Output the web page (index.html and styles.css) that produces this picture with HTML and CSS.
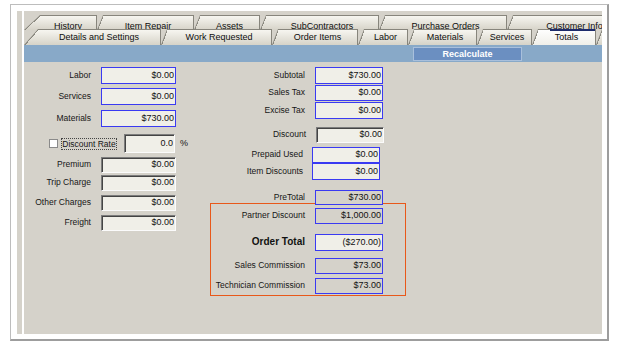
FILE: index.html
```html
<!DOCTYPE html>
<html lang="en">
<head>
    <meta charset="UTF-8" />
    <title>Work Order - Totals</title>
    <link rel="stylesheet" href="styles.css">
</head>
<body>
    <div class="frame">
        <div class="stripe"></div>
        <div class="panel">
            <div class="tabs">
                <div class="tab-row back">
                    <div class="tab first t-history">History</div>
                    <div class="tab t-repair">Item Repair</div>
                    <div class="tab t-assets">Assets</div>
                    <div class="tab t-subs">SubContractors</div>
                    <div class="tab t-po">Purchase Orders</div>
                    <div class="tab t-customer">Customer Info</div>
                </div>
                <div class="tab-row front">
                    <div class="tab first t-details">Details and Settings</div>
                    <div class="tab t-work">Work Requested</div>
                    <div class="tab t-items">Order Items</div>
                    <div class="tab t-labor">Labor</div>
                    <div class="tab t-materials">Materials</div>
                    <div class="tab t-services">Services</div>
                    <div class="tab active t-totals">Totals</div>
                    <div class="tab t-more"></div>
                </div>
            </div>

            <div class="bar">
                <button type="button" class="recalc">Recalculate</button>
            </div>

            <div class="form">
                <div class="col-left">
                    <div class="row"><label>Labor</label><input class="field" value="$0.00" readonly></div>
                    <div class="row r-services"><label>Services</label><input class="field" value="$0.00" readonly></div>
                    <div class="row r-materials"><label>Materials</label><input class="field" value="$730.00" readonly></div>
                    <div class="row r-rate">
                        <span class="check"></span>
                        <span class="focus">Discount Rate</span>
                        <input class="field sunk rate" value="0.0" readonly>
                        <span class="pct">%</span>
                    </div>
                    <div class="row r-premium"><label>Premium</label><input class="field sunk h16" value="$0.00" readonly></div>
                    <div class="row r-trip"><label>Trip Charge</label><input class="field sunk h16" value="$0.00" readonly></div>
                    <div class="row r-other"><label>Other Charges</label><input class="field sunk h16" value="$0.00" readonly></div>
                    <div class="row r-other"><label>Freight</label><input class="field sunk h16" value="$0.00" readonly></div>
                </div>

                <div class="col-mid">
                    <div class="row"><label>Subtotal</label><input class="field" value="$730.00" readonly></div>
                    <div class="row r-tax"><label>Sales Tax</label><input class="field h16" value="$0.00" readonly></div>
                    <div class="row r-tax"><label>Excise Tax</label><input class="field" value="$0.00" readonly></div>
                    <div class="row r-discount"><label>Discount</label><input class="field sunk h16" value="$0.00" readonly></div>
                    <div class="row r-prepaid"><label>Prepaid Used</label><input class="field h16" value="$0.00" readonly></div>
                    <div class="row r-itemdisc"><label>Item Discounts</label><input class="field" value="$0.00" readonly></div>
                    <div class="row r-pretotal"><label>PreTotal</label><input class="field ro h15" value="$730.00" readonly></div>

                    <div class="totals-box">
                        <div class="row"><label>Partner Discount</label><input class="field ro h16" value="$1,000.00" readonly></div>
                        <div class="row r-ordertotal"><label class="strong">Order Total</label><input class="field" value="($270.00)" readonly></div>
                        <div class="row r-salescomm"><label>Sales Commission</label><input class="field ro h16" value="$73.00" readonly></div>
                        <div class="row r-other"><label>Technician Commission</label><input class="field ro h16" value="$73.00" readonly></div>
                    </div>
                </div>
            </div>
        </div>
    </div>
</body>
</html>
```

FILE: styles.css
```css
body {
    margin: 0;
    background: #fff;
    font-family: "Liberation Sans", Arial, sans-serif;
    font-size: 8.5px;
    color: #161616;
}

.frame {
    display: flex;
    gap: 2px;
    width: 585px;
    height: 323px;
    margin: 4px 0 0 10px;
    padding: 6px 5px 5px 6px;
    background: #fff;
    border: 1px solid #bdbdbd;
    border-right: 2px solid #9d9d9d;
    border-bottom: 2px solid #9d9d9d;
}

.stripe {
    width: 5px;
    background: #d5d2ca;
}

.panel {
    flex: 1;
    display: flex;
    flex-direction: column;
    background: #d5d2ca;
    overflow: hidden;
}

/* tab strip */
.tabs {
    padding-top: 4px;
}

.tab-row {
    display: flex;
}

.tab-row.front {
    margin-top: -1px;
}

.tab {
    --ear: 6px;
    --edge: #87857c;
    position: relative;
    flex: 0 0 auto;
    box-sizing: border-box;
    display: flex;
    justify-content: center;
    padding-left: var(--ear);
    border-top: 1px solid var(--edge);
    border-right: 1px solid var(--edge);
    clip-path: polygon(var(--ear) 0, 100% 0, 100% 100%, 0 100%);
    background:
        linear-gradient(to bottom right, transparent calc(50% - 0.5px), var(--edge) calc(50% - 0.5px), var(--edge) calc(50% + 1px), transparent calc(50% + 1px)) 0 0 / var(--ear) 100% no-repeat border-box,
        linear-gradient(#f9f8f3, #d6d3c8) border-box;
    font-size: 9px;
    line-height: 10px;
    color: #0e0e0e;
    white-space: nowrap;
}

.back .tab {
    height: 15px;
    padding-top: 5px;
}

.front .tab {
    height: 16px;
    padding-top: 2px;
}

.back .first { --ear: 16px; }
.front .first { --ear: 14px; }

.tab.active {
    background:
        linear-gradient(to bottom right, transparent calc(50% - 0.5px), var(--edge) calc(50% - 0.5px), var(--edge) calc(50% + 1px), transparent calc(50% + 1px)) 0 0 / var(--ear) 100% no-repeat border-box,
        linear-gradient(#ffffff, #f0efe9) border-box;
}

.tab.active::before {
    content: "";
    position: absolute;
    top: -1px;
    left: 18px;
    right: 0;
    height: 2px;
    background: #1d2b6b;
}

.t-history { width: 73px; }
.t-repair { width: 97px; }
.t-assets { width: 66px; }
.t-subs { width: 119px; }
.t-po { width: 128px; }
.t-customer { width: 130px; }

.t-details { width: 137px; }
.t-work { width: 111px; }
.t-items { width: 86px; }
.t-labor { width: 50px; }
.t-materials { width: 69px; }
.t-services { width: 55px; }
.t-totals { width: 64px; }
.t-more { width: 40px; }

/* blue command bar */
.bar {
    display: flex;
    align-items: center;
    height: 17px;
    padding-left: 389px;
    background: #88a9c8;
}

.recalc {
    width: 109px;
    height: 14px;
    padding: 0;
    border: 1px solid #a9c0dc;
    background: #6b8fc1;
    color: #fff;
    font: bold 9px "Liberation Sans", Arial, sans-serif;
}

/* totals form */
.form {
    display: flex;
    padding-top: 5px;
}

.col-left {
    width: 186px;
    display: flex;
    flex-direction: column;
}

.col-mid {
    width: 196px;
    display: flex;
    flex-direction: column;
}

.row {
    display: flex;
    align-items: center;
}

.row label {
    padding-bottom: 2px;
    text-align: right;
    white-space: nowrap;
}

.col-left .row label {
    width: 67px;
    margin-right: 10px;
}

.col-mid .row {
    justify-content: flex-end;
    padding-right: 23px;
}

.col-mid .row label {
    margin-right: 10px;
}

.field {
    box-sizing: border-box;
    width: 75px;
    height: 17px;
    margin: 0;
    padding: 0 1px 2px 0;
    border: 1px solid #3a3af2;
    background: #f0efe8;
    color: #111;
    font: 9px "Liberation Sans", Arial, sans-serif;
    text-align: right;
    outline: none;
}

.col-mid .field {
    width: 68px;
}

.field.sunk {
    border-color: #7c7c7c #fbfbfb #fbfbfb #7c7c7c;
    box-shadow: inset 1px 1px 0 #444;
}

.field.ro {
    background: #d5d2ca;
}

.h16 { height: 16px; }
.h15 { height: 15px; }

.r-services { margin-top: 4px; }
.r-materials { margin-top: 5px; }
.r-premium { margin-top: 4px; }
.r-trip { margin-top: 2px; }
.r-other { margin-top: 4px; }

.r-rate {
    margin-top: 7px;
    padding-left: 25px;
}

.check {
    box-sizing: border-box;
    width: 9px;
    height: 9px;
    margin-top: -1px;
    border: 1px solid #8a8a8a;
    background: #fff;
}

.focus {
    box-sizing: border-box;
    width: 56px;
    height: 12px;
    margin-left: 3px;
    border: 1px dotted #444;
    line-height: 10px;
    text-align: center;
    white-space: nowrap;
}

.field.rate {
    width: 51px;
    height: 19px;
    margin-left: 7px;
}

.pct {
    margin-left: 5px;
    padding-bottom: 2px;
    font-size: 9px;
}

.r-tax { margin-top: 1px; }

.r-discount {
    margin-top: 8px;
    padding-right: 22px !important;
}

.r-prepaid,
.r-itemdisc {
    padding-right: 26px !important;
}

.r-prepaid { margin-top: 4px; }

.r-prepaid label,
.r-itemdisc label {
    margin-right: 9px !important;
}

.r-pretotal {
    margin-top: 10px;
}

.r-pretotal .field {
    position: relative;
    z-index: 1;
}

.totals-box {
    margin-top: -2px;
    padding: 4px 0 1px;
    border: 1px solid #e8581a;
}

.totals-box .row {
    padding-right: 22px;
}

.r-ordertotal { margin-top: 10px; }
.r-salescomm { margin-top: 7px; }

.strong {
    font-size: 10px;
    font-weight: bold;
    color: #111;
}
```
